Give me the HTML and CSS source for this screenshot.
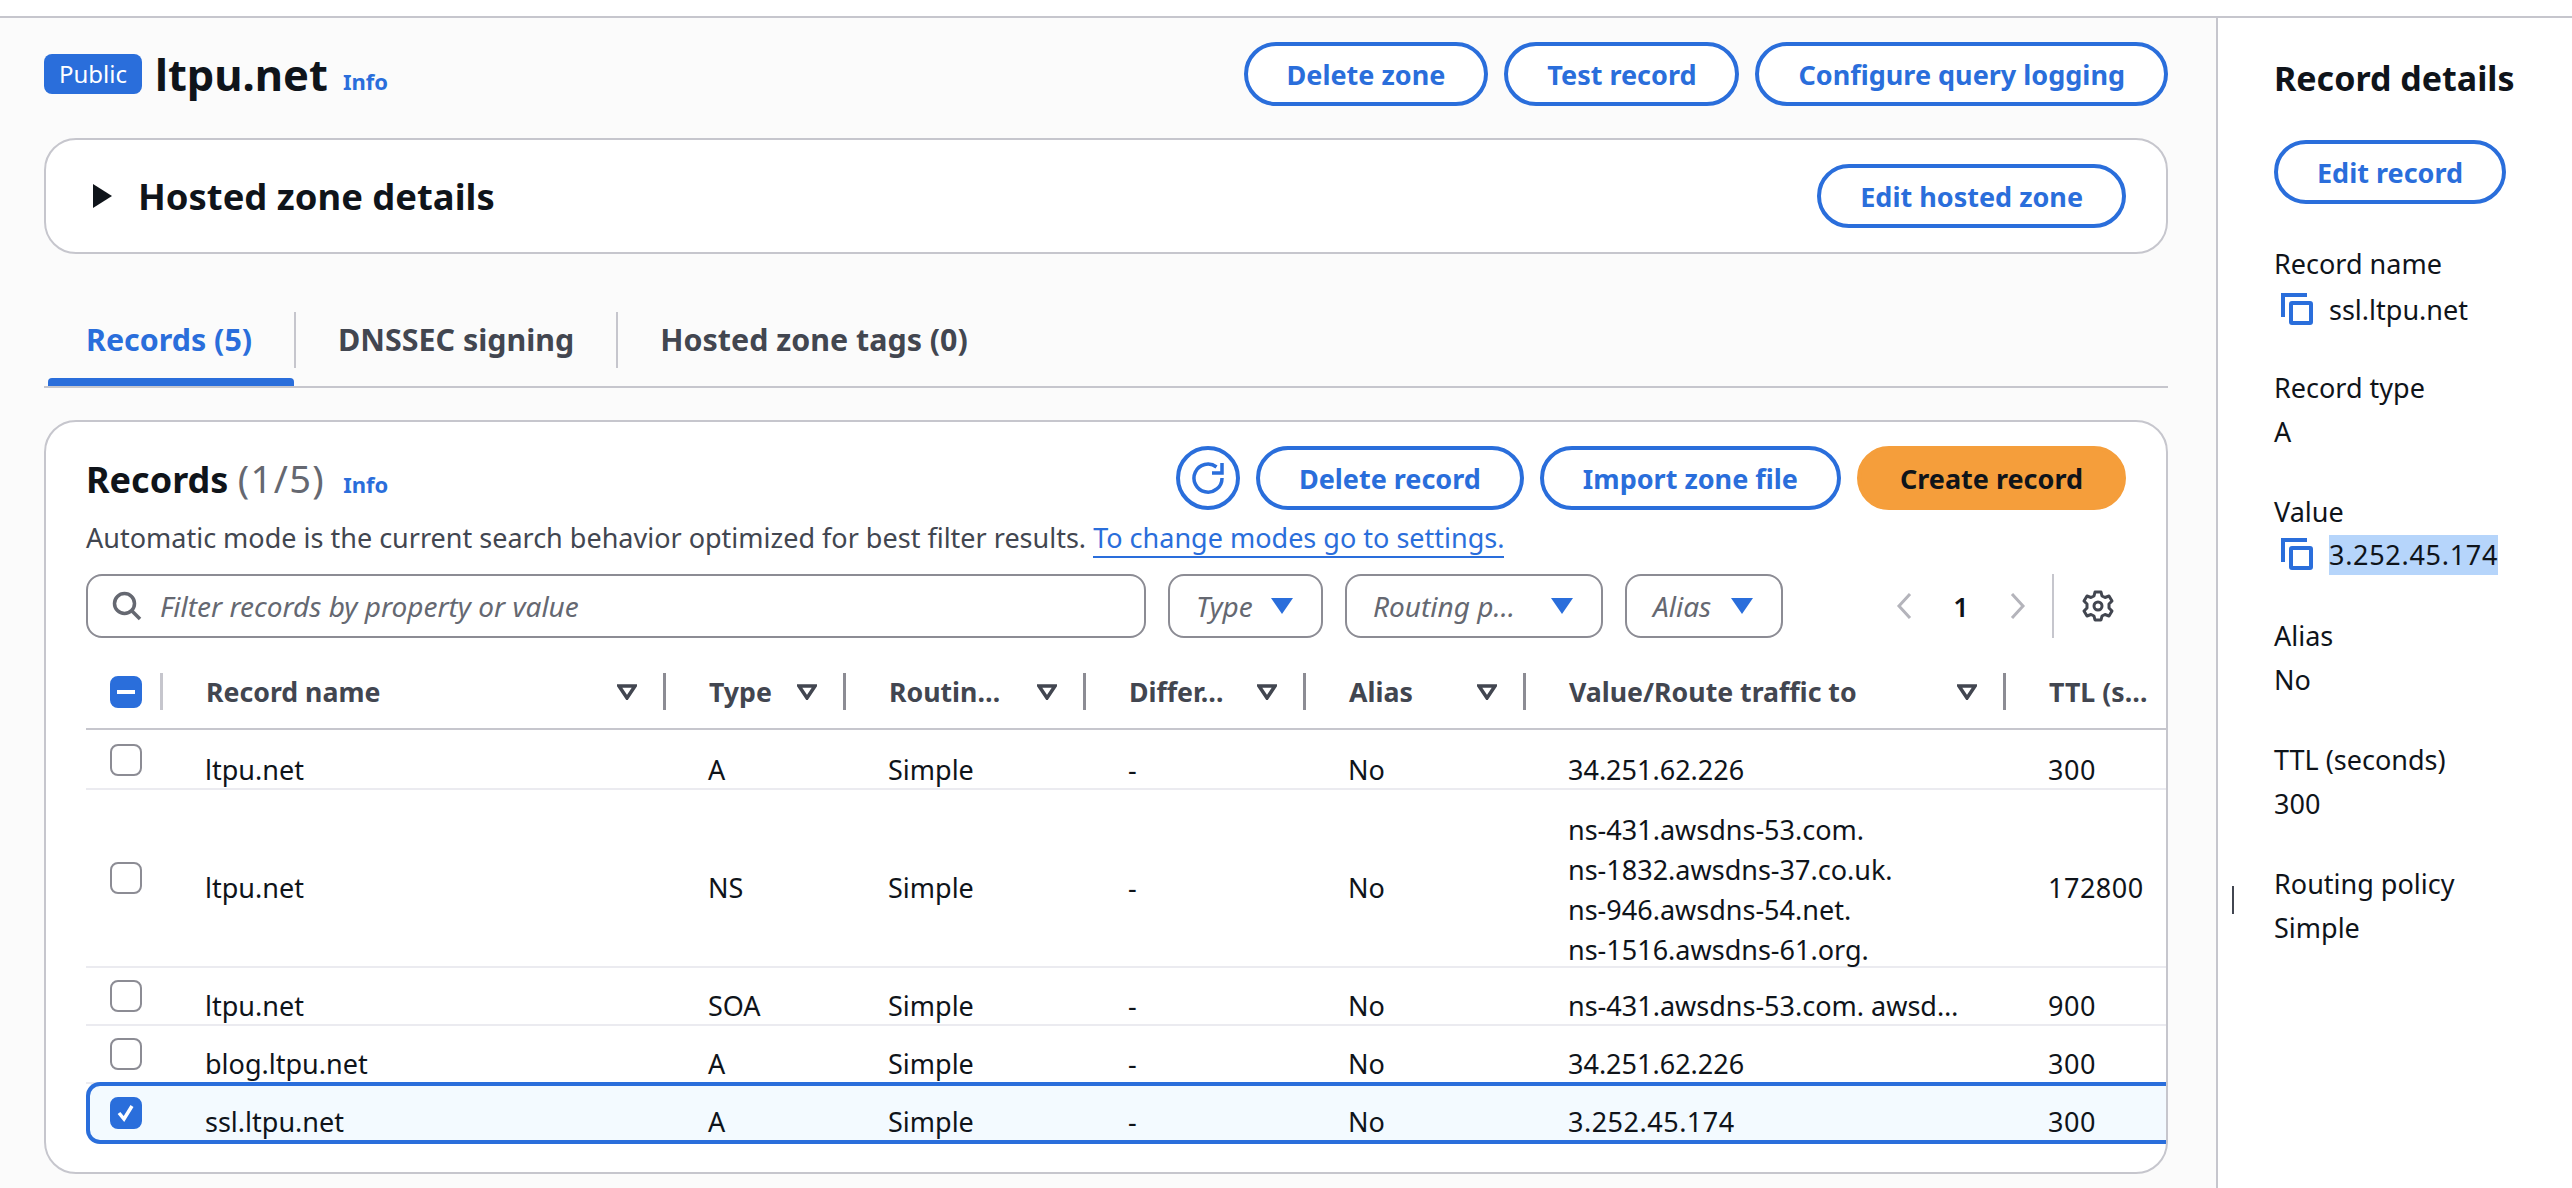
FILE: index.html
```html
<!DOCTYPE html>
<html lang="en">
<head>
    <meta charset="UTF-8">
    <meta name="viewport" content="width=device-width, initial-scale=1.0">
    <title>ltpu.net - Hosted zone</title>
    <link rel="stylesheet" href="styles.css">
</head>
<body>
    <div class="topbar"></div>
    <div class="layout">
        <main class="content">
            <section class="page-head">
                <div class="page-title">
                    <span class="badge">Public</span>
                    <h1>ltpu.net</h1>
                    <a class="info" href="#">Info</a>
                </div>
                <div class="actions">
                    <button class="btn">Delete zone</button>
                    <button class="btn">Test record</button>
                    <button class="btn">Configure query logging</button>
                </div>
            </section>

            <section class="zone-card">
                <div class="zone-title">
                    <svg class="zone-caret" width="20" height="24" viewBox="0 0 20 24"><path d="M1 0l19 12L1 24z"/></svg>
                    <h2>Hosted zone details</h2>
                </div>
                <button class="btn">Edit hosted zone</button>
            </section>

            <nav class="tabs">
                <div class="tab active"><div class="tab-label">Records (5)</div><div class="tab-bar"></div></div>
                <div class="tab"><div class="tab-label">DNSSEC signing</div><div class="tab-bar"></div></div>
                <div class="tab"><div class="tab-label last">Hosted zone tags (0)</div><div class="tab-bar"></div></div>
            </nav>

            <section class="records-card">
                <div class="records-head">
                    <div class="records-title">
                        <h2>Records <span class="count">(1/5)</span></h2>
                        <a class="info" href="#">Info</a>
                    </div>
                    <div class="actions">
                        <button class="btn btn-icon">
                            <svg width="32" height="32" viewBox="0 0 32 32" fill="none" stroke="#2a6edb" stroke-width="3.5"><path d="M24.5 5A14 14 0 1 0 30 16"/><path d="M20 11h10V1"/></svg>
                        </button>
                        <button class="btn">Delete record</button>
                        <button class="btn">Import zone file</button>
                        <button class="btn btn-primary">Create record</button>
                    </div>
                </div>
                <p class="mode-note">Automatic mode is the current search behavior optimized for best filter results. <a href="#">To change modes go to settings.</a></p>

                <div class="filters">
                    <div class="search">
                        <svg width="30" height="30" viewBox="0 0 30 30" fill="none" stroke="#656871" stroke-width="3.5"><circle cx="12.5" cy="12.5" r="10"/><path d="M20 20l8 8"/></svg>
                        <span>Filter records by property or value</span>
                    </div>
                    <div class="select select-type"><span>Type</span><svg width="22" height="16" viewBox="0 0 22 16"><path d="M0 0h22L11 16z"/></svg></div>
                    <div class="select select-routing"><span>Routing p…</span><svg width="22" height="16" viewBox="0 0 22 16"><path d="M0 0h22L11 16z"/></svg></div>
                    <div class="select select-alias"><span>Alias</span><svg width="22" height="16" viewBox="0 0 22 16"><path d="M0 0h22L11 16z"/></svg></div>
                    <div class="pager">
                        <svg width="16" height="26" viewBox="0 0 16 26" fill="none" stroke="#b4b4bb" stroke-width="3"><path d="M14 1L3 13l11 12"/></svg>
                        <span class="page-num">1</span>
                        <svg width="16" height="26" viewBox="0 0 16 26" fill="none" stroke="#b4b4bb" stroke-width="3"><path d="M2 1l11 12L2 25"/></svg>
                        <div class="pager-settings">
                            <svg width="32" height="32" viewBox="0 0 32 32" fill="none" stroke="#424650" stroke-width="3" stroke-linejoin="round"><path d="M13 2h6l1 4 3 1.5 4-1.5 3 5-3 3v4l3 3-3 5-4-1.5L20 26l-1 4h-6l-1-4-3-1.5-4 1.5-3-5 3-3v-4l-3-3 3-5 4 1.5L12 6z"/><circle cx="16" cy="16" r="4"/></svg>
                        </div>
                    </div>
                </div>

                <div class="table">
                    <div class="row row-head">
                        <div class="th th-check"><div class="check check-on"><span class="dash"></span></div></div>
                        <div class="th"><span>Record name</span><svg width="20" height="16" viewBox="0 0 20 16"><path d="M2 2h16L10 14z"/></svg></div>
                        <div class="th"><span>Type</span><svg width="20" height="16" viewBox="0 0 20 16"><path d="M2 2h16L10 14z"/></svg></div>
                        <div class="th"><span>Routin…</span><svg width="20" height="16" viewBox="0 0 20 16"><path d="M2 2h16L10 14z"/></svg></div>
                        <div class="th"><span>Differ…</span><svg width="20" height="16" viewBox="0 0 20 16"><path d="M2 2h16L10 14z"/></svg></div>
                        <div class="th"><span>Alias</span><svg width="20" height="16" viewBox="0 0 20 16"><path d="M2 2h16L10 14z"/></svg></div>
                        <div class="th"><span>Value/Route traffic to</span><svg width="20" height="16" viewBox="0 0 20 16"><path d="M2 2h16L10 14z"/></svg></div>
                        <div class="th th-last"><span>TTL (s…</span></div>
                    </div>

                    <div class="row row-first">
                        <div class="td-check"><div class="check"></div></div>
                        <div class="td">ltpu.net</div>
                        <div class="td">A</div>
                        <div class="td">Simple</div>
                        <div class="td">-</div>
                        <div class="td">No</div>
                        <div class="td">34.251.62.226</div>
                        <div class="td td-num">300</div>
                    </div>
                    <div class="row">
                        <div class="td-check"><div class="check"></div></div>
                        <div class="td">ltpu.net</div>
                        <div class="td">NS</div>
                        <div class="td">Simple</div>
                        <div class="td">-</div>
                        <div class="td">No</div>
                        <div class="td td-lines">
                            <div>ns-431.awsdns-53.com.</div>
                            <div>ns-1832.awsdns-37.co.uk.</div>
                            <div>ns-946.awsdns-54.net.</div>
                            <div>ns-1516.awsdns-61.org.</div>
                        </div>
                        <div class="td td-num">172800</div>
                    </div>
                    <div class="row">
                        <div class="td-check"><div class="check"></div></div>
                        <div class="td">ltpu.net</div>
                        <div class="td">SOA</div>
                        <div class="td">Simple</div>
                        <div class="td">-</div>
                        <div class="td">No</div>
                        <div class="td">ns-431.awsdns-53.com. awsd…</div>
                        <div class="td td-num">900</div>
                    </div>
                    <div class="row">
                        <div class="td-check"><div class="check"></div></div>
                        <div class="td">blog.ltpu.net</div>
                        <div class="td">A</div>
                        <div class="td">Simple</div>
                        <div class="td">-</div>
                        <div class="td">No</div>
                        <div class="td">34.251.62.226</div>
                        <div class="td td-num">300</div>
                    </div>
                    <div class="row row-selected">
                        <div class="td-check">
                            <div class="check check-on">
                                <svg width="20" height="20" viewBox="0 0 20 20" fill="none" stroke="#fff" stroke-width="3.5"><path d="M3 10l5 6 8-13"/></svg>
                            </div>
                        </div>
                        <div class="td">ssl.ltpu.net</div>
                        <div class="td">A</div>
                        <div class="td">Simple</div>
                        <div class="td">-</div>
                        <div class="td">No</div>
                        <div class="td td-num">3.252.45.174</div>
                        <div class="td td-num">300</div>
                    </div>
                </div>
            </section>
        </main>

        <aside class="details">
            <span class="resize-handle"></span>
            <h2>Record details</h2>
            <button class="btn">Edit record</button>
            <dl class="detail-list">
                <div class="detail">
                    <dt>Record name</dt>
                    <dd class="copy">
                        <svg width="32" height="32" viewBox="0 0 32 32" fill="none" stroke="#2a6edb" stroke-width="4"><path d="M2 24V2h24"/><rect x="10" y="10" width="20" height="20" rx="1"/></svg>
                        <span>ssl.ltpu.net</span>
                    </dd>
                </div>
                <div class="detail">
                    <dt>Record type</dt>
                    <dd>A</dd>
                </div>
                <div class="detail">
                    <dt>Value</dt>
                    <dd class="copy">
                        <svg width="32" height="32" viewBox="0 0 32 32" fill="none" stroke="#2a6edb" stroke-width="4"><path d="M2 24V2h24"/><rect x="10" y="10" width="20" height="20" rx="1"/></svg>
                        <span class="selected-text">3.252.45.174</span>
                    </dd>
                </div>
                <div class="detail">
                    <dt>Alias</dt>
                    <dd>No</dd>
                </div>
                <div class="detail">
                    <dt>TTL (seconds)</dt>
                    <dd>300</dd>
                </div>
                <div class="detail">
                    <dt>Routing policy</dt>
                    <dd>Simple</dd>
                </div>
            </dl>
        </aside>
    </div>
</body>
</html>
```

FILE: styles.css
```css
* {
    box-sizing: border-box;
}

html, body {
    height: 100%;
}

body {
    margin: 0;
    font-family: "Noto Sans", "Open Sans", sans-serif;
    font-size: 27px;
    color: #0f141a;
    background-color: #fff;
    overflow: hidden;
}

h1, h2, p, dl, dd {
    margin: 0;
}

a {
    color: #2a6edb;
    text-decoration: none;
}

.topbar {
    height: 18px;
    border-bottom: 2px solid #c6c6cd;
}

.layout {
    display: flex;
    height: 1170px;
}

.content {
    width: 2218px;
    padding: 24px 48px 0 44px;
    background-color: #fbfbfb;
    border-right: 2px solid #c6c6cd;
}

/* Buttons */
.btn {
    height: 64px;
    padding: 0 39px;
    font-family: inherit;
    font-size: 27px;
    font-weight: 700;
    color: #2a6edb;
    background-color: #fff;
    border: 4px solid #2a6edb;
    border-radius: 32px;
    white-space: nowrap;
}

.btn-icon {
    display: flex;
    align-items: center;
    justify-content: center;
    width: 64px;
    padding: 0;
}

.btn-primary {
    color: #0f141a;
    background-color: #f59e3b;
    border-color: #f59e3b;
}

.actions {
    display: flex;
    gap: 16px;
}

/* Page header */
.page-head {
    display: flex;
    justify-content: space-between;
}

.page-title {
    display: flex;
    align-items: center;
    height: 64px;
}

.badge {
    width: 98px;
    height: 40px;
    line-height: 40px;
    text-align: center;
    font-size: 24px;
    color: #fff;
    background-color: #2a6edb;
    border-radius: 8px;
}

h1 {
    margin-left: 13px;
    font-size: 43.5px;
    font-weight: 700;
    line-height: 60px;
}

.info {
    font-size: 22px;
    font-weight: 700;
}

.page-title .info {
    margin: 14px 0 0 15px;
}

/* Hosted zone details */
.zone-card {
    display: flex;
    align-items: center;
    justify-content: space-between;
    height: 116px;
    margin-top: 32px;
    padding: 0 40px 0 46px;
    background-color: #fff;
    border: 2px solid #c6c6cd;
    border-radius: 32px;
}

.zone-title {
    display: flex;
    align-items: center;
    gap: 26px;
}

.zone-caret {
    fill: #0f141a;
}

.zone-title h2 {
    font-size: 36.4px;
    font-weight: 700;
}

/* Tabs */
.tabs {
    display: flex;
    margin-top: 58px;
    border-bottom: 2px solid #c6c6cd;
}

.tab-label {
    height: 56px;
    padding: 0 42px;
    line-height: 56px;
    font-size: 30.4px;
    font-weight: 700;
    color: #424650;
    border-right: 2px solid #c6c6cd;
}

.tab-label.last {
    border-right: none;
}

.tab-bar {
    height: 8px;
    margin: 10px 2px 0 4px;
    border-radius: 4px 4px 0 0;
}

.tab.active .tab-label {
    color: #2a6edb;
}

.tab.active .tab-bar {
    background-color: #2a6edb;
}

/* Records card */
.records-card {
    margin-top: 32px;
    padding: 24px 40px 28px 40px;
    background-color: #fff;
    border: 2px solid #c6c6cd;
    border-radius: 32px;
}

.records-head {
    display: flex;
    justify-content: space-between;
    align-items: center;
}

.records-title {
    display: flex;
    align-items: center;
    gap: 18px;
}

.records-title h2 {
    font-size: 36px;
    font-weight: 700;
}

.records-title .info {
    margin-top: 12px;
}

.count {
    font-size: 38px;
    font-weight: 400;
    letter-spacing: 1.4px;
    color: #656871;
}

.mode-note {
    height: 36px;
    margin-top: 10px;
    line-height: 36px;
    color: #424650;
    white-space: nowrap;
}

.mode-note a {
    display: inline-block;
    border-bottom: 2px solid #2a6edb;
}

/* Filters */
.filters {
    display: flex;
    align-items: center;
    gap: 22px;
    margin-top: 18px;
}

.search,
.select {
    display: flex;
    align-items: center;
    height: 64px;
    font-size: 28px;
    font-style: italic;
    color: #656871;
    background-color: #fff;
    border: 2px solid #8c8c94;
    border-radius: 16px;
}

.search {
    gap: 18px;
    width: 1060px;
    padding-left: 24px;
}

.select {
    justify-content: space-between;
    padding: 0 28px 0 26px;
}

.select svg {
    fill: #2a6edb;
}

.select-type {
    width: 155px;
}

.select-routing {
    width: 258px;
}

.select-alias {
    width: 158px;
}

.pager {
    display: flex;
    align-items: center;
    margin-left: auto;
    margin-right: 12px;
}

.page-num {
    width: 98px;
    text-align: center;
    font-weight: 600;
}

.pager-settings {
    display: flex;
    align-items: center;
    height: 64px;
    margin-left: 26px;
    padding-left: 28px;
    border-left: 2px solid #c6c6cd;
}

/* Table */
.table {
    margin: 35px -40px 0 0;
    overflow: hidden;
}

.row {
    display: grid;
    grid-template-columns: 77px 503px 180px 240px 220px 220px 480px 160px;
    border-bottom: 2px solid #ebebf0;
}

.row-head {
    padding-bottom: 18px;
    border-bottom-color: #c6c6cd;
}

.row-first {
    padding-top: 2px;
}

.th {
    display: flex;
    align-items: center;
    justify-content: space-between;
    height: 37px;
    padding: 0 26px 0 43px;
    font-size: 26.7px;
    font-weight: 700;
    color: #424650;
    border-right: 3px solid #8c8c94;
    white-space: nowrap;
}

.th svg {
    fill: none;
    stroke: #424650;
    stroke-width: 3.5;
    flex-shrink: 0;
}

.th-check {
    padding: 0 0 0 24px;
    border-right: 3px solid #c6c6cd;
}

.th-last {
    border-right: none;
}

.td {
    align-self: center;
    padding: 20px 0 0 42px;
    line-height: 36px;
    white-space: nowrap;
}

.td-num {
    letter-spacing: 0.5px;
}

.td-lines {
    line-height: 40px;
}

.td-lines div:last-child {
    margin-bottom: -4px;
}

.td-check {
    align-self: center;
    padding-left: 24px;
}

.check {
    display: flex;
    align-items: center;
    justify-content: center;
    width: 32px;
    height: 32px;
    background-color: #fff;
    border: 2px solid #8c8c94;
    border-radius: 8px;
}

.check-on {
    background-color: #2a6edb;
    border-color: #2a6edb;
}

.dash {
    width: 18px;
    height: 4px;
    background-color: #fff;
}

.row-selected {
    grid-template-columns: 73px 503px 180px 240px 220px 220px 480px 160px;
    margin-top: -2px;
    background-color: #f3faff;
    border: 4px solid #2a6edb;
    border-right: none;
    border-radius: 14px 0 0 14px;
}

.row-selected .td {
    padding-top: 18px;
}

.row-selected .td-check {
    padding-left: 20px;
}

/* Side panel */
.details {
    position: relative;
    flex: 1;
    padding: 30px 20px 0 56px;
    background-color: #fff;
}

.details h2 {
    margin-bottom: 32px;
    font-size: 34px;
    font-weight: 700;
    line-height: 60px;
    white-space: nowrap;
}

.resize-handle {
    position: absolute;
    left: 14px;
    top: 868px;
    width: 2px;
    height: 28px;
    background-color: #424650;
}

.detail-list {
    margin-top: 39px;
}

.detail {
    height: 88px;
    margin-bottom: 36px;
    white-space: nowrap;
}

.detail dt {
    line-height: 42px;
}

.detail dd {
    line-height: 46px;
}

.copy {
    display: flex;
    align-items: center;
    gap: 16px;
    padding-left: 7px;
}

.copy span {
    margin-top: 2px;
}

.selected-text {
    line-height: 40px;
    letter-spacing: 0.7px;
    background-color: #b6d5fb;
}
```
